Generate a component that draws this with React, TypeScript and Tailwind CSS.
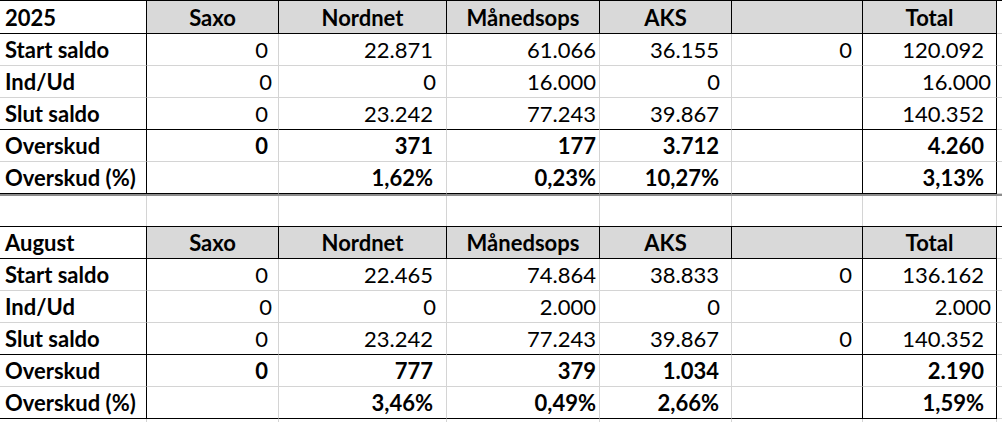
import React from "react";

type Row = {
  label: string;
  values: string[];
  bold?: boolean;
  line: "gray" | "black";
  tight?: boolean;
};

const widths = [
  "w-[147px]",
  "w-[132px]",
  "w-[168px]",
  "w-[153px]",
  "w-[132px]",
  "w-[131px]",
  "w-[134px]",
];

// right borders inside data rows: label, blank and total columns are framed in black
const dataRight = [
  "border-r-black",
  "border-r-[#d4d4d4]",
  "border-r-[#d4d4d4]",
  "border-r-[#d4d4d4]",
  "border-r-[#d4d4d4]",
  "border-r-black",
  "border-r-black",
];

const padNormal = ["pl-[5px]", "pr-[10px]", "pr-[13px]", "pr-[3px]", "pr-[12px]", "pr-[10px]", "pr-[12px]"];
const padTight = ["pl-[5px]", "pr-[6px]", "pr-[10px]", "pr-[3px]", "pr-[11px]", "pr-[10px]", "pr-[5px]"];

const headers = ["Saxo", "Nordnet", "Månedsops", "AKS", "", "Total"];

const table2025: Row[] = [
  { label: "Start saldo", values: ["0", "22.871", "61.066", "36.155", "0", "120.092"], line: "gray" },
  { label: "Ind/Ud", values: ["0", "0", "16.000", "0", "", "16.000"], line: "gray", tight: true },
  { label: "Slut saldo", values: ["0", "23.242", "77.243", "39.867", "", "140.352"], line: "black" },
  { label: "Overskud", values: ["0", "371", "177", "3.712", "", "4.260"], bold: true, line: "gray" },
  { label: "Overskud (%)", values: ["", "1,62%", "0,23%", "10,27%", "", "3,13%"], bold: true, line: "black" },
];

const tableAugust: Row[] = [
  { label: "Start saldo", values: ["0", "22.465", "74.864", "38.833", "0", "136.162"], line: "gray" },
  { label: "Ind/Ud", values: ["0", "0", "2.000", "0", "", "2.000"], line: "gray", tight: true },
  { label: "Slut saldo", values: ["0", "23.242", "77.243", "39.867", "0", "140.352"], line: "black" },
  { label: "Overskud", values: ["0", "777", "379", "1.034", "", "2.190"], bold: true, line: "gray" },
  { label: "Overskud (%)", values: ["", "3,46%", "0,49%", "2,66%", "", "1,59%"], bold: true, line: "black" },
];

const GridFill = ({ height }: { height: string }) => (
  <div className={`flex ${height}`}>
    {widths.map((w, i) => (
      <div key={i} className={`${w} shrink-0 border-r border-r-[#d4d4d4]`} />
    ))}
    <div className="flex-1" />
  </div>
);

const SheetTable = ({
  title,
  rows,
  headHeight,
}: {
  title: string;
  rows: Row[];
  headHeight: string;
}) => (
  <div className="flex flex-col">
    <div className={`flex ${headHeight} border-t border-t-black`}>
      <div className={`${widths[0]} shrink-0 flex items-center pl-[5px] font-bold border-r border-r-black border-b border-b-black`}>
        {title}
      </div>
      {headers.map((h, i) => (
        <div
          key={i}
          className={`${widths[i + 1]} shrink-0 flex items-center justify-center font-bold bg-[#d9d9d9] border-r border-r-black border-b border-b-black`}
        >
          {h}
        </div>
      ))}
      <div className="flex-1 border-b border-b-[#d4d4d4]" />
    </div>
    {rows.map((row) => {
      const pads = row.tight ? padTight : padNormal;
      const line = row.line === "black" ? "border-b-black" : "border-b-[#d4d4d4]";
      return (
        <div key={row.label} className={`flex h-[32px] ${row.bold ? "font-bold" : ""}`}>
          <div className={`${widths[0]} ${pads[0]} shrink-0 flex items-center font-bold border-r border-b ${dataRight[0]} ${line}`}>
            {row.label}
          </div>
          {row.values.map((v, i) => (
            <div
              key={i}
              className={`${widths[i + 1]} ${pads[i + 1]} shrink-0 flex items-center justify-end border-r border-b ${dataRight[i + 1]} ${line}`}
            >
              {v}
            </div>
          ))}
          <div className="flex-1 border-b border-b-[#d4d4d4]" />
        </div>
      );
    })}
  </div>
);

export default function App() {
  return (
    <div className="w-[1002px] h-[422px] overflow-hidden bg-white text-black text-[22px] font-['Lato',sans-serif]">
      <SheetTable title="2025" rows={table2025} headHeight="h-[34px]" />
      <div className="h-[2px] bg-[#8c8c8c]" />
      <GridFill height="h-[30px]" />
      <SheetTable title="August" rows={tableAugust} headHeight="h-[33px]" />
      <GridFill height="h-[10px]" />
    </div>
  );
}
